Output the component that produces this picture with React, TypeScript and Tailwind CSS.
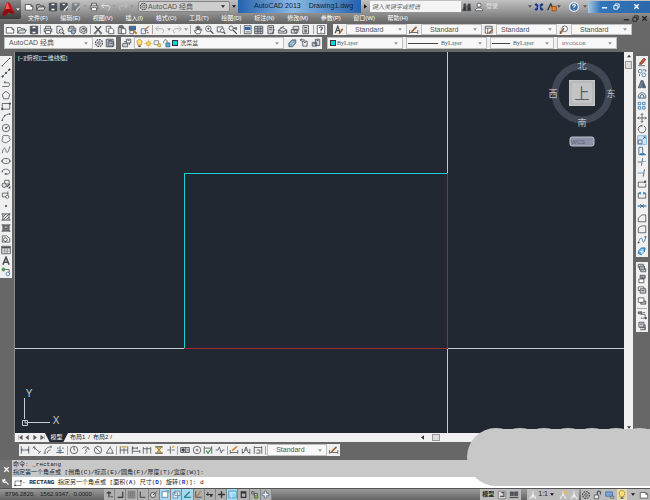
import type { ReactNode } from "react";

const SANS = "font-['Liberation_Sans','Noto_Sans_CJK_SC',sans-serif]";
const MONO = "font-['Liberation_Mono','Noto_Sans_CJK_SC',monospace]";
const SERIF = "font-['Liberation_Serif','Noto_Sans_CJK_SC',serif]";

const icons: Record<string, ReactNode> = {
  new: <path d="M2 4h9l3 3v6H2zM11 4v3h3" fill="#fff" />,
  open: (<><path d="M1 13V4h5l1 2h5v2" /><path d="M1 13l3-5h11l-3 5z" fill="#ddd" /></>),
  save: (<><path d="M2 2h12v12H2z" fill="#4a5468" /><path d="M5 2h6v4H5zM5 10h6v4H5z" fill="#fff" /></>),
  saveas: (<><path d="M2 2h11v11H2z" fill="#4a5468" /><path d="M5 2h5v4H5z" fill="#fff" /><path d="M8 14l6-7" stroke="#eee" strokeWidth="2.4" /></>),
  print: (<><path d="M4 6V2h8v4M2 6h12v5H2z" fill="#d8d8d8" /><path d="M4 9h8v5H4z" fill="#fff" /></>),
  preview: (<><path d="M12 7V5L9 2H3v11h4" /><circle cx="10" cy="10" r="3.3" fill="#cfe0ec" /><path d="M12 12l3 3" strokeWidth="2" /></>),
  plot: (<><path d="M4 5V2h7v3M2 5h12v5H2z" fill="#ccc" /><circle cx="10" cy="11" r="3.5" fill="#8bb4d6" /></>),
  publish: (<><path d="M3 4l6-2 5 3v7l-5 2-6-3z" fill="#ddd" /><circle cx="9" cy="8" r="3" fill="#fff" /><path d="M9 5v3h3" /></>),
  cut: (<><path d="M3 2l9 10M13 2L4 12" strokeWidth="2" /><circle cx="3.5" cy="13" r="1.5" /><circle cx="12.5" cy="13" r="1.5" /></>),
  copy: (<><path d="M2 2h7v9H2z" fill="#fff" /><path d="M6 5h5l3 3v6H6z" fill="#fff" /></>),
  paste: (<><path d="M2 3h9v11H2z" fill="#bbb" /><path d="M4 1h5v3H4z" fill="#777" /><path d="M7 6h7v8H7z" fill="#fff" /></>),
  match: (<><path d="M2 2h10v6H2z" fill="#3e6fa8" /><path d="M3 9h6v5H3z" fill="#fff" /><path d="M9 9l5 5" stroke="#c07a2c" strokeWidth="3" /></>),
  blockedit: (<><path d="M2 6h7v8H2zM7 9h6" stroke="#4b6b94" /><path d="M8 8l6-6M11 12h3" stroke="#cf7a28" strokeWidth="2" /></>),
  undo: (<><path d="M2 6h8c5 0 5 6 1 7" /><path d="M5 2L1 6l4 4" /></>),
  redo: (<><path d="M14 6H6c-5 0-5 6-1 7" /><path d="M11 2l4 4-4 4" /></>),
  undodim: (<g stroke="#a2a6ab"><path d="M2 6h8c5 0 5 6 1 7" /><path d="M5 2L1 6l4 4" /></g>),
  redodim: (<g stroke="#a2a6ab"><path d="M14 6H6c-5 0-5 6-1 7" /><path d="M11 2l4 4-4 4" /></g>),
  pan: <path d="M5 14L2 9l1-1 2 2V3h2v5V2h2v6l1-5h1v6l2-3 1 1-3 7z" fill="#fff" />,
  zoom: (<><circle cx="7" cy="6" r="4.5" fill="#fff" /><path d="M10 9l5 5" strokeWidth="2" /><path d="M5 6h4M7 4v4" /></>),
  zoomwin: (<><path d="M2 3h9v8H2z" /><circle cx="10" cy="9" r="3" fill="#fff" /><path d="M12 11l3 3" strokeWidth="2" /></>),
  zoomprev: (<><circle cx="5" cy="5" r="3.5" /><path d="M8 8l6 6M9 5h5M13 3v5" strokeWidth="1.8" /></>),
  props: (<><path d="M2 1h11v13H2z" fill="#e8eef6" /><path d="M3 3h9v5H3z" fill="#3967a5" stroke="none" /><path d="M4 11h7" /></>),
  grid: (<><path d="M1 2h13v12H1z" fill="#b9c0c8" /><path d="M1 6h13M6 2v12M10 2v12M1 10h13" /></>),
  palette: (<><path d="M3 1h9v13H3z" fill="#ccc" /><path d="M5 4h5M5 7h5M9 14l5-7" /></>),
  sheet: (<><path d="M1 8l6-4 7 4v5H1z" fill="#ddd" /><path d="M1 8l7 3 6-3M3 5l7-3" /></>),
  markup: (<><path d="M5 2h9v6H5zM2 7h9v6H2z" fill="#ddd" /><circle cx="10" cy="10" r="3" /></>),
  calc: (<><path d="M3 1h9v13H3z" fill="#eee" /><path d="M5 4h5M5 8h5M5 11h5" strokeWidth="2" /></>),
  help: (<><path d="M2 1h12v13H2z" fill="#fff" /><path d="M5 5c1-3 6-2 5 1L8 8v2M8 12v1" strokeWidth="1.8" /></>),
  textstyle: (<><path d="M2 13L6 2l4 11M3 9h6" strokeWidth="2" /><path d="M8 14l6-8" stroke="#a0632c" strokeWidth="2.6" /></>),
  dimstyle: (<><path d="M1 8v6M14 8v6M1 12h13" /><path d="M4 11l8-8" stroke="#a0632c" strokeWidth="2.6" /></>),
  tablestyle: (<><path d="M2 2h11v11H2zM2 5h11M6 5v8" fill="#fff" /><path d="M8 13l6-6" stroke="#a0632c" strokeWidth="2.6" /></>),
  leader: (<><circle cx="9" cy="6" r="4.5" fill="#fff" /><path d="M2 14l6-9" stroke="#a0632c" strokeWidth="2.6" /><path d="M2 14V9" /></>),
  gear: (<><circle cx="8" cy="8" r="5.5" strokeWidth="2" strokeDasharray="3 1.2" /><circle cx="8" cy="8" r="2.2" /></>),
  wsave: (<><path d="M2 2h11v12H2zM5 6h9v7H5z" fill="#b8c0ca" /><path d="M5 4h6M7 9h5" /></>),
  layers: (<><path d="M1 9h8v5H1zM3 6h9v5" fill="#ccd6e0" /><path d="M7 2h7v6H7z" fill="#eee" /><path d="M9 4h3" /></>),
  layer1: (<><path d="M3 8l5-5h6v5l-5 6H3z" fill="#7fa2b5" stroke="#496475" /><path d="M5 10l5-5M7 12l5-5" stroke="#dce8ee" /></>),
  layer2: (<><path d="M6 5h7v8H6z" fill="#eee" /><path d="M2 3h7M2 3l3-2M2 3l3 3M8 7h3" /></>),
  layer3: (<><path d="M7 2h7v10H7zM2 7h7v6H2z" fill="#ccd6e0" /><path d="M9 4h3M4 9h3" /></>),
  line: (<><path d="M2 14L14 2" /><path d="M1 14h2M13 2h2" strokeWidth="2" /></>),
  xline: (<><path d="M2 14L14 2" strokeDasharray="5 1" /><circle cx="8" cy="8" r="1.3" fill="#333" /><circle cx="2.5" cy="13.5" r="1.2" fill="#333" /><circle cx="13.5" cy="2.5" r="1.2" fill="#333" /></>),
  pline: <path d="M2 12h8c5 0 5-6 1-6H5M5 6l2-3" />,
  polygon: <path d="M8 2l6 5-2 7H4L2 7z" />,
  rect: (<><path d="M2 4h12v9H2z" /><path d="M1 12h2v2H1zM13 3h2v2h-2z" fill="#333" /></>),
  arc: (<><path d="M2 14C3 8 6 4 14 3" /><path d="M1 13h2M5 6h2M13 3h2" strokeWidth="2.4" /></>),
  circle: (<><circle cx="8" cy="8" r="6" /><path d="M8 8l4-3" /><circle cx="8" cy="8" r="1" fill="#333" /></>),
  cloud: <path d="M3 6c-2-4 4-5 5-3 3-2 6 0 5 3 3 2 1 6-2 6-2 3-5 2-6 1-4 1-4-4-2-7z" />,
  spline: <path d="M2 13C4 2 7 4 8 9s4 4 6-7" />,
  ellipse: (<><ellipse cx="8" cy="8" rx="6.5" ry="4" /><path d="M1 8h2M13 8h2M8 8h.5M8 4h.5" strokeWidth="2.4" /></>),
  earc: (<><path d="M2 6c3-4 12-3 12 2 0 3-4 4-7 3" /><path d="M1 7h2M6 11h3" strokeWidth="2.4" /></>),
  insert: (<><path d="M6 2h7v6H6z" /><circle cx="5" cy="10" r="3.5" fill="#ddd" /><path d="M9 13l5-5M14 12v2h-2" strokeWidth="2" /></>),
  block: (<><path d="M2 5h9v6H2z" /><circle cx="10" cy="11" r="2.5" fill="#fff" /><path d="M11 2v3" /></>),
  point: <circle cx="8" cy="8" r="1.2" fill="#333" />,
  hatch: (<><path d="M3 3h10v10H3z" fill="#ddd" /><path d="M3 8l5-5M3 13L13 3M8 13l5-5" /><path d="M1 3h2M13 3h2M1 13h2M13 13h2" strokeWidth="2" /></>),
  gradient: (<><path d="M3 3h10v10H3z" fill="#777" /><path d="M5 5h6v3H5z" fill="#ddd" /><path d="M1 3h2M13 3h2M1 13h2M13 13h2" strokeWidth="2" /></>),
  region: (<><path d="M2 3h7l5 4v6H2z" /><circle cx="7" cy="9" r="3" /></>),
  table: (<><path d="M1 2h14v12H1z" fill="#fff" /><path d="M1 4h14" strokeWidth="3" /><path d="M1 8h14M1 11h14M6 5v9M10 5v9" strokeWidth=".8" /></>),
  text: <path d="M3 14L8 2l5 12M5 10h6" strokeWidth="2.6" />,
  addsel: (<><circle cx="4" cy="4" r="2.5" fill="#4b9a50" stroke="#4b9a50" /><path d="M7 4h6v5" /><circle cx="11" cy="11" r="3" stroke="#3c7ebb" /></>),
  erase: (<><path d="M4 10l7-8 3 2-7 8z" fill="#c75a3a" stroke="#803018" /><path d="M3 12l4-1M2 14h11" /></>),
  copy2: (<><circle cx="5" cy="5" r="3" stroke="#3a7cb0" /><circle cx="11" cy="11" r="3" stroke="#3a7cb0" /><path d="M9 3h5v3M4 10v3" /></>),
  mirror: (<><path d="M7 2v12H2z" fill="#6b8fae" /><path d="M9 2v12h5z" fill="#3a648a" /></>),
  offset: (<><path d="M2 13V9c2-6 10-6 12 0v4z" fill="#d8e4ee" stroke="#406482" /><path d="M5 13V9c2-2 4-2 6 0v4" /></>),
  array: (<path d="M2 2h4v4H2zM9 2h4v4H9zM2 9h4v4H2zM9 9h4v4H9z" stroke="#4a8fc4" strokeWidth="1.6" />),
  move: <path d="M8 1v14M1 8h14M6 3l2-2 2 2M6 13l2 2 2-2M3 6L1 8l2 2M13 6l2 2-2 2" />,
  rotate: (<><path d="M5 3a6 6 0 1 0 6 0" /><path d="M5 3h4" strokeWidth="2" /></>),
  scale: (<><path d="M1 1h14v14H1z" fill="#cfe6f6" stroke="#6fb2de" /><path d="M2 8h6v6H2zM9 7l4-4M10 3h3v3" fill="none" stroke="#468" /></>),
  stretch: (<><path d="M3 2h6v9l5 3H3z" stroke="#35658c" /><path d="M5 13h6" strokeWidth="3" stroke="#2377b8" /></>),
  trim: (<><path d="M1 8h6M7 14l2-12" /><path d="M9 7h5" stroke="#3b8cc6" strokeDasharray="3 1" /></>),
  extend: (<><path d="M12 2l-2 12" /><path d="M1 8h9" stroke="#3b8cc6" /></>),
  breakpt: (<><path d="M2 13V5h10M2 13h12V8" /><path d="M12 3h2v3h-2z" fill="#333" /></>),
  brk: (<><path d="M5 5H2v8h12V5h-3" /><path d="M5 3v4M11 3v4" stroke="#2377b8" strokeWidth="2" /></>),
  join: (<><path d="M1 8h14" stroke="#2377b8" strokeWidth="2" /><path d="M5 5l3 3-3 3M11 5L8 8l3 3" /></>),
  chamfer: <path d="M2 14V8l6-5h6v11z" />,
  fillet: <path d="M2 14V9c0-4 3-6 7-6h5v11z" />,
  blend: (<><path d="M2 13c4-12 6-9 7-4s3 3 5-6" stroke="#2b78b4" /><path d="M1 12h3M12 3h3" strokeWidth="2" /></>),
  explode: (<><path d="M3 7l4-4h6l-1 6-5 5-5-2z" fill="#63b0e4" stroke="#216aa5" /><path d="M4 8l7 2M8 5v8" stroke="#fff" /></>),
  order1: (<><path d="M2 2h8v5H2zM6 9h8v5H6z" fill="#ddd" /><path d="M4 5h8v6H4z" fill="#aaa" /></>),
  order2: (<><path d="M5 2h8v5H5z" fill="#999" /><path d="M3 8h8v6H3zM9 5v3" fill="#fff" /></>),
  order3: (<><path d="M2 3h9v6H2z" fill="#fff" /><path d="M5 6h9v7H5zM7 9h5" fill="#ccc" /></>),
  order4: (<><path d="M6 8h8v5H6z" fill="#bbb" /><path d="M2 3h9v7H2z" fill="#fff" /></>),
  order5: (<><path d="M2 3h6v3H2z" fill="#888" /><path d="M6 7h7v6H6M10 4h3" /><path d="M13 12h2v2h-2z" fill="#333" /></>),
  order6: (<path d="M3 2h8v8H3zM5 10h8v4H5M5 5h4M11 6h2v8" fill="#ccc" />),
  dlin: <path d="M2 2v12M14 2v12M2 8h12M4 6L2 8l2 2M12 6l2 2-2 2" />,
  dali: <path d="M2 3l11 9M1 5l4-3M10 14l4-4M4 7l1-3" />,
  darc: <path d="M3 13C3 6 7 3 13 3M1 13h4M13 1v4M7 13c0-3 2-5 5-5" />,
  dord: (<><path d="M2 12h12M8 2v12M3 5h3M11 5h3" /><path d="M4 9h7" stroke="#2b78b4" /></>),
  drad: (<><circle cx="8" cy="8" r="6" /><path d="M8 8V3M8 8h2" /></>),
  djog: <path d="M2 6c3-5 11-3 11 2M6 14l3-4-2-2 5-4" />,
  ddia: (<><circle cx="8" cy="8" r="6" /><path d="M4 4l8 8" /></>),
  dang: <path d="M2 13h12M2 13l7-11M8 4c3 2 4 5 4 9" />,
  dquick: (<><path d="M2 2v12M14 2v12M2 8h12M8 5v9" /><path d="M4 3h8" stroke="#d49b2a" strokeWidth="2" /></>),
  dbase: <path d="M2 2v12M2 5h8M2 10h12M10 3v4M14 8v5M4 4L2 5l2 2" />,
  dcont: <path d="M2 3v11M8 3v11M14 3v11M2 6h12" />,
  dspace: (<><path d="M2 3h12M2 13h12" strokeWidth="2" /><path d="M4 3l8 10M12 3L4 13" stroke="#bb8b20" strokeWidth="2" /></>),
  dbreak: (<><path d="M7 2v12M2 8h4M9 8h5" /><path d="M10 4l3-2" stroke="#d49b2a" strokeWidth="2" /></>),
  tol: (<><path d="M1 4h14v8H1z" fill="#ccc" /><circle cx="5" cy="8" r="2" fill="#333" /><path d="M9 4v8M11 8h3" /></>),
  center: (<><circle cx="8" cy="8" r="6" /><path d="M6 8h4M8 6v4" /></>),
  inspect: (<><path d="M2 2v12M14 2v12M2 5h12" /><path d="M5 9l3 4 5-7" stroke="#3e9950" strokeWidth="2" /></>),
  jogline: <path d="M1 8h4l2-5 3 10 2-5h3" />,
  dedit: (<><path d="M2 8v6M14 8v6M2 12h12" /><path d="M5 9l8-7" stroke="#d28a2a" strokeWidth="2.6" /></>),
  dtedit: <path d="M2 6v8M14 6v8M2 12h3M11 12h3M5 11l3-8 3 8M6 8h4" />,
  dupdate: <path d="M2 2v12M14 2v12M2 4h12M6 8h5v5H6M5 12l2 2" />,
  plus: <path d="M8 2v12M2 8h12" strokeWidth="2.4" />,
  snap: (<><path d="M7 2v11M3 5h8" strokeWidth="2" /><path d="M10 12h4" stroke="#555" strokeWidth="2" /></>),
  grid2: (<><path d="M2 2h12v12H2z" fill="#8a8d92" stroke="#777" /><path d="M2 6h12M2 10h12M6 2v12M10 2v12" stroke="#777" strokeWidth="1" /></>),
  ortho: <path d="M12 3v10H3" strokeWidth="2" />,
  ortho2: <path d="M4 3v10h9" strokeWidth="1.6" />,
  polar: (<><circle cx="7" cy="9" r="4.5" fill="#ddd" /><path d="M7 9l7-6" /></>),
  osnap: <path d="M2 3h10v10H2zM10 1h4v4" fill="#fff" stroke="#456c90" />,
  osnap3: <path d="M5 2h9v8H5zM2 5h8v9H2z" fill="#fff" stroke="#456c90" />,
  track: <path d="M2 13h12M2 13L12 3" stroke="#218a87" strokeWidth="2.4" />,
  ducs: (<><path d="M3 2v11h11" /><path d="M3 13L11 5M9 3h4" stroke="#c27432" strokeWidth="2" /></>),
  lwt: <path d="M2 8h12M5 4v6M10 9v3M12 9v3" strokeWidth="2" />,
  qprop: (<><path d="M1 2h14v12H1z" fill="#9cd3f4" stroke="#4c91bc" /><path d="M1 5h14M6 5v9" stroke="#d9f1ff" /></>),
  sq: <path d="M4 3h8v10H4zM4 5h8" strokeWidth="2" />,
  sel: (<><path d="M3 3h4v4H3zM8 6h5v8H8z" fill="#ddd" /><circle cx="11" cy="12" r="3" fill="#7cad61" stroke="#4a7c32" /></>),
  annot: <path d="M6 2h4v4h4v4h-4v4H6v-4H2V6h4z" fill="#e9f2fa" stroke="#53687a" />,
  page: (<><path d="M2 2h12v12H2z" fill="#ddd" stroke="#777" /><path d="M7 4h4v6H5" strokeWidth="2" /></>),
  views: (<><path d="M2 3h5v6H2zM9 3h5v6H9z" fill="#555" /><path d="M1 12h14" strokeWidth="2" /></>),
  scaleA: <path d="M8 2v5M8 7l-5 7M8 7l5 7M5 11h6" strokeWidth="1.8" />,
  visA: (<><path d="M8 2v5M8 7l-5 7M8 7l5 7" stroke="#eee" strokeWidth="1.8" /><path d="M9 2l5 4" stroke="#edbd34" strokeWidth="3" /></>),
  sun: (<><circle cx="8" cy="8" r="3.5" fill="#ffd452" stroke="#c79420" /><path d="M8 1v2M8 13v2M1 8h2M13 8h2M3 3l1 1M12 12l1 1M3 13l1-1M12 4l1-1" stroke="#c79420" /></>),
  bulb: (<><path d="M5 9C2 5 4 1 8 1s6 4 3 8v2H5z" fill="#ffe26b" stroke="#ac842b" /><path d="M6 13h4" strokeWidth="2.4" /></>),
  freeze: (<><path d="M2 3h8v7H2z" fill="#eee" stroke="#777" /><circle cx="11" cy="11" r="3" fill="#f1d262" stroke="#aa8f3d" /></>),
  lock: (<><path d="M7 7h7v7H7z" fill="#5ab0d8" stroke="#225f82" /><path d="M9 7V4c0-4-6-3-6 1v3" /></>),
  lockbar: (<><path d="M2 8h7v6H2z" fill="#eee" /><path d="M7 8V4c0-3 5-3 5 0v3" strokeWidth="2" /></>),
  hw: (<><path d="M1 3h11v7H1z" fill="#7aa4d8" stroke="#4b6ea5" /><path d="M9 10h5v3H9z" fill="#eee" /></>),
  find: (<><path d="M3 3h3v4l1 7H1l2-7zM10 3h3v4l1 7H9V7z" fill="#333" /><path d="M5 8h6" strokeWidth="2" /></>),
  user: (<><circle cx="8" cy="5" r="3.3" fill="#eee" /><path d="M2 14c0-6 12-6 12 0z" fill="#eee" /></>),
  exchange: (<><path d="M2 3l12 10M14 3L2 13" stroke="#1d3b80" strokeWidth="4" /><path d="M8 5v6" stroke="#bcd4ff" strokeWidth="2" /></>),
  a360: (<><path d="M1 13L6 3l3 6" strokeWidth="2" stroke="#333" /><path d="M8 7h7v7H8z" fill="#e8802a" stroke="#9b4b0d" /></>),
  question: (<><circle cx="8" cy="8" r="7" fill="#3d6da8" stroke="#e6eefa" strokeWidth="2" /><path d="M6 6c0-3 5-2 4 0L8 8v1M8 11v1" stroke="#fff" strokeWidth="1.8" /></>),
  wrench: <path d="M13 13L7 7M4 2l2 2-2 2-2-2c-1 4 2 6 5 4" stroke="#fff" strokeWidth="2.4" />,
  close: <path d="M3 3l10 10M13 3L3 13" strokeWidth="3" />,
  min: <path d="M2 11h12" strokeWidth="3" />,
  restore: <path d="M5 5V2h9v8h-3M2 6h9v8H2z" strokeWidth="2" />,
  cmd: (<><path d="M2 4h12v9H2z" fill="#fff" /><path d="M1 12h2v2H1zM13 3h2v2h-2z" fill="#333" /></>),
};

function Icon({ name, stroke = "#4c525a" }: { name: string; stroke?: string }) {
  return (
    <svg viewBox="0 0 16 16" className="block h-full w-full" fill="none" stroke={stroke} strokeWidth="1.3" aria-hidden="true">
      {icons[name]}
    </svg>
  );
}

function Tool({ name, stroke, className = "" }: { name: string; stroke?: string; className?: string }) {
  return (
    <button type="button" aria-label={name} className={`h-[10px] w-[10px] shrink-0 ${className}`}>
      <Icon name={name} stroke={stroke} />
    </button>
  );
}

function Caret({ color = "#555" }: { color?: string }) {
  return (
    <svg viewBox="0 0 6 4" className="block h-[3px] w-1 shrink-0" aria-hidden="true">
      <path d="M0 0h6L3 4z" fill={color} />
    </svg>
  );
}

/** "|" is a separator and "v" a drop-down arrow; the rest are icon names. */
function Tools({ items, stroke }: { items: string; stroke?: string }) {
  return (
    <>
      {items.split(" ").map((item, i) => {
        if (item === "|") return <span key={i} className="h-[9px] w-px shrink-0 bg-[#a5a5a5]" />;
        if (item === "v") return <Caret key={i} color="#999" />;
        return <Tool key={i} name={item} stroke={stroke} />;
      })}
    </>
  );
}

function Combo({ label, value, width, text = "", lead }: { label: string; value: string; width: string; text?: string; lead?: ReactNode }) {
  return (
    <label className={`flex h-full shrink-0 items-center border border-[#c0c0c0] bg-[#f8f8f8] pr-1 ${width}`}>
      {lead}
      <select aria-label={label} className={`h-full min-w-0 flex-1 appearance-none bg-transparent text-[#555] ${text}`}>
        <option>{value}</option>
      </select>
      <Caret color="#999" />
    </label>
  );
}

function Strip({ children, className = "" }: { children: ReactNode; className?: string }) {
  return <div className={`flex shrink-0 items-center bg-[#f0f0f0] ${className}`}>{children}</div>;
}

const menus = ["文件(F)", "编辑(E)", "视图(V)", "插入(I)", "格式(O)", "工具(T)", "绘图(D)", "标注(N)", "修改(M)", "参数(P)", "窗口(W)", "帮助(H)"];

function Header() {
  return (
    <header className="flex h-[23px] bg-linear-to-b from-[#c2c2c2] from-0% via-[#929292] via-55% to-[#666] to-100%">
      <button type="button" aria-label="AutoCAD" className="flex h-[19px] w-[21px] items-center gap-px rounded-br-xs bg-linear-to-b from-[#8a8a8a] to-[#3a3a3a] pl-px">
        <svg viewBox="0 0 16 20" className="h-[17px] w-[14px]" aria-hidden="true">
          <path d="M1 16L7 1l3 1 6 12-4 1-2-3-5 1-1 5z" fill="#c5161d" />
          <path d="M7 1l-2 9 5-1-3-8z" fill="#f25a55" />
          <path d="M1 16l4-6 5-1 6 5-4 1-3-2-5 5z" fill="#8b0a10" />
        </svg>
        <Caret color="#ddd" />
      </button>
      <div className="flex min-w-0 flex-1 flex-col">
        <div className="flex h-[13px] items-center">
          <div className="flex w-[117px] items-center justify-between pl-[3px] pr-1">
            <Tools items="new open save saveas" stroke="#444" />
            <span className="h-[10px] w-[10px] opacity-50"><Icon name="saveas" /></span>
            <Tools items="v print" stroke="#555" />
            <Tools items="undo v" stroke="#f0f0f0" />
            <Tools items="redo v" stroke="#c4c4c4" />
          </div>
          <label className="flex h-[11px] w-[92px] items-center rounded-xs border border-[#858585] bg-[#cdcdcd] pr-1">
            <span className="h-[9px] w-[9px]"><Icon name="gear" /></span>
            <select aria-label="工作空间" className="min-w-0 flex-1 appearance-none text-[7px] leading-[9px] text-[#555]">
              <option>AutoCAD 经典</option>
            </select>
            <Caret color="#222" />
          </label>
          <span className="flex w-2 justify-center"><Caret color="#111" /></span>
          <h1 className="flex h-[13px] flex-1 items-center gap-2 whitespace-nowrap bg-linear-to-r from-[#2462ae] via-[#8cb9e2] via-45% to-[#2462ae] pl-4 text-[7px] text-[#102040]">
            <span>AutoCAD 2013</span>
            <span>Drawing1.dwg</span>
          </h1>
          <button type="button" aria-label="展开" className="flex w-[9px] justify-center">
            <svg viewBox="0 0 4 6" className="h-[5px] w-[3px]" aria-hidden="true"><path d="M0 0l4 3-4 3z" fill="#111" /></svg>
          </button>
          <input aria-label="搜索" placeholder="键入关键字或短语" className="h-[11px] w-[91px] bg-[#f4f4f4] px-0.5 text-[6px] italic placeholder:text-[#666]" />
          <div className="flex w-[127px] items-center pl-px">
            <Tool name="find" />
            <Tool name="user" className="ml-0.5" />
            <button type="button" className="ml-0.5 whitespace-nowrap text-[6px] text-[#e4e4e4]">登录</button>
            <span className="ml-[30px]"><Caret color="#555" /></span>
            <Tool name="exchange" className="ml-0.5" />
            <Tool name="a360" className="ml-[3px]" />
            <Caret color="#555" />
            <Tool name="question" className="ml-2" />
            <span className="ml-1"><Caret color="#555" /></span>
          </div>
          <div className="flex h-[12px] w-[62px] items-center justify-between bg-linear-to-r from-[#a8c7e2] via-[#3275b8] via-20% to-[#2b68ac] pl-[13px] pr-[10px]">
            <button type="button" aria-label="最小化" className="h-[7px] w-[7px]"><Icon name="min" stroke="#fff" /></button>
            <button type="button" aria-label="还原" className="h-[7px] w-[7px]"><Icon name="restore" stroke="#fff" /></button>
            <button type="button" aria-label="关闭" className="ml-2 h-[7px] w-[7px]"><Icon name="close" stroke="#fff" /></button>
          </div>
        </div>
        <div className="flex h-[10px] items-center justify-between">
          <nav className="flex w-[387px] justify-between pl-[7px] text-[6px] leading-[9px] text-white">
            {menus.map((m) => (
              <button type="button" key={m} className="whitespace-nowrap">{m}</button>
            ))}
          </nav>
          <div className="flex gap-0.5 pr-0.5">
            {["min", "restore", "close"].map((n) => (
              <button type="button" key={n} aria-label={n} className="h-[7px] w-[7px]"><Icon name={n} stroke="#222" /></button>
            ))}
          </div>
        </div>
      </div>
    </header>
  );
}

function LineSample({ width }: { width: string }) {
  return <span className={`ml-px mr-[3px] h-px shrink-0 bg-[#444] ${width}`} />;
}

function Toolbars() {
  const std = "pl-2 text-[7px] leading-[9px]";
  const layerText = `text-[6px] leading-[9px] ${SERIF}`;
  return (
    <div className="flex flex-col gap-0.5 bg-[#686868] pb-[3px] pl-1 pt-px">
      <div className="flex h-[11px] gap-1.5">
        <Strip className="w-[323px] justify-between px-px">
          <Tools items="new open save | print preview plot publish | cut copy paste match blockedit | undodim v redodim v | pan zoom zoomwin zoomprev | props grid palette sheet markup calc | help" />
        </Strip>
        <Strip className="gap-0.5 pl-px">
          <Tool name="textstyle" />
          <Combo label="文字样式" value="Standard" width="w-[61px]" text={std} />
          <Tool name="dimstyle" />
          <Combo label="标注样式" value="Standard" width="w-[61px]" text={std} />
          <Tool name="tablestyle" />
          <Combo label="表格样式" value="Standard" width="w-[61px]" text="pl-1 text-[7px] leading-[9px]" />
          <Tool name="leader" />
          <Combo label="引线样式" value="Standard" width="w-[61px]" text={std} />
        </Strip>
      </div>
      <div className="flex h-[12px] gap-[5px]">
        <Strip className="gap-px pr-px">
          <Combo label="工作空间" value="AutoCAD 经典" width="w-[89px]" text="pl-1 text-[7px] leading-[10px]" />
          <Tool name="gear" />
          <Tool name="wsave" />
        </Strip>
        <Strip className="w-[201px] justify-between px-px">
          <Tool name="layers" />
          <Combo
            label="图层"
            value="洗菜盆"
            width="w-[150px]"
            text="pl-0.5 text-[6px] leading-[10px]"
            lead={
              <span className="flex items-center">
                {["bulb", "sun", "freeze", "lock"].map((n) => (
                  <span key={n} className="h-[9px] w-[9px]"><Icon name={n} /></span>
                ))}
                <span className="ml-px h-1.5 w-1.5 border border-[#333] bg-[#00d8d8]" />
              </span>
            }
          />
          <Tools items="layer1 layer2 layer3" />
        </Strip>
        <Strip className="gap-[3px]">
          <Combo label="颜色" value="ByLayer" width="w-[76px]" text={layerText} lead={<span className="ml-0.5 mr-px h-1.5 w-1.5 border border-[#333] bg-[#00d8d8]" />} />
          <Combo label="线型" value="ByLayer" width="w-[81px]" text={layerText} lead={<LineSample width="w-[30px]" />} />
          <Combo label="线宽" value="ByLayer" width="w-[64px]" text={layerText} lead={<LineSample width="w-[18px]" />} />
          <Combo label="打印样式" value="BYCOLOR" width="w-[60px]" text={`pl-1 text-[5px] leading-[9px] ${SERIF}`} />
        </Strip>
      </div>
    </div>
  );
}

function Compass() {
  return (
    <svg viewBox="0 0 72 96" className="absolute right-[6px] top-[5px] h-24 w-[72px]" aria-hidden="true">
      <circle cx="36" cy="36" r="27" fill="none" stroke="#414855" strokeWidth="7" />
      <g fill="#b9bdc4" fontSize="9" textAnchor="middle">
        <text x="36" y="12">北</text>
        <text x="36" y="69">南</text>
        <text x="7" y="40">西</text>
        <text x="65" y="40">东</text>
      </g>
      <path d="M23 23h26v26H23z" fill="#c3c4c5" />
      <path d="M25 25h22v22H25z" fill="none" stroke="#adafb0" />
      <text x="36" y="42" fontSize="15" fill="#5b5e62" textAnchor="middle">上</text>
      <rect x="24" y="80" width="24" height="9" rx="2" fill="#8d92a8" stroke="#bcc0cf" />
      <text x="32" y="87" fontSize="6" fill="#5f647a" textAnchor="middle">WCS</text>
    </svg>
  );
}

function Canvas() {
  return (
    <div className="relative min-w-0 flex-1 overflow-hidden bg-[#222831]">
      <p className="absolute left-[3px] top-[2px] text-[6px] leading-[9px] text-[#dfe3e8]">[−][俯视][二维线框]</p>
      <svg className="absolute inset-0 h-full w-full" aria-hidden="true" shapeRendering="crispEdges" strokeWidth="1" fill="none">
        <path d="M432.5 0v121" stroke="#c3c7cc" />
        <line x1="432.5" y1="296" x2="432.5" y2="100%" stroke="#c3c7cc" />
        <path d="M0 296.5h169" stroke="#c3c7cc" />
        <line x1="432" y1="296.5" x2="100%" y2="296.5" stroke="#c3c7cc" />
        <path d="M169 296.5h263.500V121" stroke="#9c2a32" />
        <path d="M169.500 296V121.500H432" stroke="#18d0d8" />
      </svg>
      <svg viewBox="0 0 44 44" className="absolute bottom-[5px] left-[5px] h-11 w-11" fill="none" stroke="#c8ccd2" aria-hidden="true">
        <path d="M4.500 35V14M8 38.500h22M2.500 36.500h5v5h-5zM5 37v2h2" />
        <text x="9" y="13" fontSize="10" fill="#c8ccd2" stroke="none" textAnchor="middle">Y</text>
        <text x="36" y="40" fontSize="10" fill="#c8ccd2" stroke="none" textAnchor="middle">X</text>
      </svg>
      <Compass />
    </div>
  );
}

function SideTools({ items, className = "" }: { items: string; className?: string }) {
  return (
    <div className={`flex flex-col items-center justify-between bg-[#f0f0f0] py-px ${className}`}>
      {items.split(" ").map((n, i) =>
        n === "|" ? <span key={i} className="h-px w-[10px] bg-[#aaa]" /> : <Tool key={i} name={n} />,
      )}
    </div>
  );
}

function SheetTabs() {
  return (
    <div className="flex h-[9px] items-center bg-[#f0f0f0] text-[6px] leading-[9px] text-[#222]">
      <div className="flex w-[30px] items-center justify-between pl-[3px]">
        {["M1 0v6M6 0L2 3l4 3z", "M5 0L1 3l4 3z", "M1 0l4 3-4 3z", "M6 0v6M1 0l4 3-4 3z"].map((d) => (
          <button type="button" key={d} aria-label="切换布局" className="h-[5px] w-[5px]">
            <svg viewBox="0 0 7 6" className="block h-full w-full" aria-hidden="true"><path d={d} fill="#555" stroke="#555" strokeWidth=".6" /></svg>
          </button>
        ))}
      </div>
      <button type="button" className="h-full w-[23px] bg-[#222831] text-white [clip-path:polygon(0_0,100%_0,80%_100%,20%_100%)]">模型</button>
      <button type="button" className="pl-0.5">布局1</button>
      <span className="px-[3px]">/</span>
      <button type="button">布局2</button>
      <span className="px-0.5">/</span>
      <div className="flex min-w-0 flex-1 justify-end pr-[193px]">
        <div className="flex items-center gap-2">
          <svg viewBox="0 0 4 6" className="h-[5px] w-[3px]" aria-hidden="true"><path d="M4 0L0 3l4 3z" fill="#333" /></svg>
          <span className="h-[7px] w-2 border border-[#999] bg-[#ddd]" />
        </div>
      </div>
    </div>
  );
}

function CommandLine() {
  return (
    <section className={`flex h-7 text-[6px] text-[#222] ${MONO}`}>
      <div className="flex w-3 flex-col items-center justify-around bg-[#707070] pt-1">
        <button type="button" aria-label="关闭" className="h-[7px] w-[7px]"><Icon name="close" stroke="#fff" /></button>
        <button type="button" aria-label="自定义" className="h-2 w-2"><Icon name="wrench" /></button>
      </div>
      <div className="flex min-w-0 flex-1 flex-col">
        <div className="h-[17px] bg-[#c8c8c8] pl-px pt-px leading-[8px]">
          <p>命令: _rectang</p>
          <p>指定第一个角点或 [倒角(C)/标高(E)/圆角(F)/厚度(T)/宽度(W)]:</p>
        </div>
        <div className="flex h-[11px] items-center whitespace-pre bg-white pl-0.5">
          <span className="h-2 w-2"><Icon name="cmd" /></span>
          <label htmlFor="command" className="whitespace-pre">
            - <b>RECTANG</b> 指定另一个角点或 [面积(<b className="text-[#2a34c0]">A</b>) 尺寸(<b className="text-[#2a34c0]">D</b>) 旋转(<b className="text-[#2a34c0]">R</b>)]:
          </label>
          <input id="command" defaultValue="d" className="ml-1 h-[9px] min-w-0 flex-1 bg-transparent" />
        </div>
      </div>
    </section>
  );
}

function StatusBar() {
  const modes = ["snap", "ortho", "grid2", "ortho2", "polar", "osnap", "osnap3", "track", "ducs", "lwt", "plus", "qprop", "sq", "sel", "annot"];
  const active = ["osnap", "osnap3", "track", "qprop"];
  return (
    <footer className="flex h-[12px] items-center border-t border-[#555] bg-linear-to-b from-[#9a9a9a] to-[#646464] text-[6px] text-[#222]">
      <output className="w-[104px] whitespace-pre pl-[5px]">8796.2820,   1562.9347,  0.0000</output>
      <div className="flex h-full w-[168px] bg-[#b0b0b0]">
        {modes.map((m) => (
          <button type="button" key={m} aria-label={m} className={`flex flex-1 items-center justify-center border-r border-[#858585] ${active.includes(m) ? "bg-[#a8d8f0]" : ""}`}>
            <span className="h-[9px] w-[9px]"><Icon name={m} stroke="#333" /></span>
          </button>
        ))}
      </div>
      <div className="ml-auto flex h-full items-center justify-around bg-[#bcbcbc] pl-0.5">
        <button type="button" className="font-bold">模型</button>
        <Tool name="page" className="ml-[3px]" />
        <Tool name="views" className="ml-0.5 mr-0.5" />
      </div>
      <div className="ml-1.5 flex h-full items-center bg-[#bcbcbc] pl-px">
        <Tool name="scaleA" stroke="#eee" />
        <button type="button" className="flex items-center gap-0.5 text-[7px]">1:1<Caret color="#111" /></button>
        <Tool name="visA" className="ml-1" />
        <Tool name="scaleA" stroke="#eee" className="ml-px" />
      </div>
      <div className="ml-0.5 flex h-full items-center gap-0.5 bg-[#bcbcbc] pr-px">
        <Tool name="gear" />
        <Tool name="lockbar" />
        <Tool name="hw" />
        <span className="flex h-full items-center bg-[#e2dcae]"><Tool name="bulb" /></span>
        <span className="px-0.5"><Caret color="#111" /></span>
        <Tool name="new" />
      </div>
    </footer>
  );
}

export default function App() {
  return (
    <main className={`relative flex h-screen flex-col overflow-hidden bg-[#676767] ${SANS}`}>
      <Header />
      <Toolbars />
      <div className="flex min-h-0 flex-1">
        <aside className="w-[14px] pt-1">
          <SideTools className="h-[222px] w-3" items="line xline pline polygon rect arc circle cloud spline ellipse earc insert block point hatch gradient region table text addsel" />
        </aside>
        <div className="flex min-w-0 flex-1 flex-col border-l border-[#8d8d8d]">
          <div className="flex min-h-0 flex-1">
            <Canvas />
            <div className="flex w-[9px] flex-col items-center bg-[#f0f0f0] py-0.5">
              <svg viewBox="0 0 6 4" className="h-1 w-1" aria-hidden="true"><path d="M0 4h6L3 0z" fill="#333" /></svg>
              <span className="mt-[3px] h-2 w-[7px] border border-[#999] bg-[#ddd]" />
              <span className="mt-auto pb-0.5"><Caret color="#333" /></span>
            </div>
          </div>
          <SheetTabs />
        </div>
        <aside className="flex w-[17px] flex-col items-center gap-[5px] pt-1">
          <SideTools className="h-[201px] w-3" items="erase copy2 mirror offset array move rotate scale stretch trim extend breakpt brk join chamfer fillet blend explode" />
          <SideTools className="h-[70px] w-3" items="order1 order2 order3 order4 | order5 order6" />
        </aside>
      </div>
      <div className="pb-1 pl-[19px] pt-0.5">
        <Strip className="h-[12px] w-[321px] justify-between px-px">
          <Tools items="dlin dali darc dord | drad djog ddia dang | dquick dbase dcont dspace dbreak | tol center inspect jogline | dedit dtedit dupdate |" />
          <Combo label="标注样式" value="Standard" width="w-[60px]" text="pl-2 text-[7px] leading-[10px]" />
          <Tool name="dimstyle" />
        </Strip>
      </div>
      <CommandLine />
      <StatusBar />
      <svg viewBox="0 0 183 60" className="absolute bottom-[13px] right-0 h-[60px] w-[183px]" fill="#c8c8c8" aria-hidden="true">
        <path d="M29 2h154v57H29z" />
        {[29, 53, 77, 101, 125, 149, 173].map((x) => (
          <circle key={x} cx={x} cy="30" r="29" />
        ))}
      </svg>
    </main>
  );
}
